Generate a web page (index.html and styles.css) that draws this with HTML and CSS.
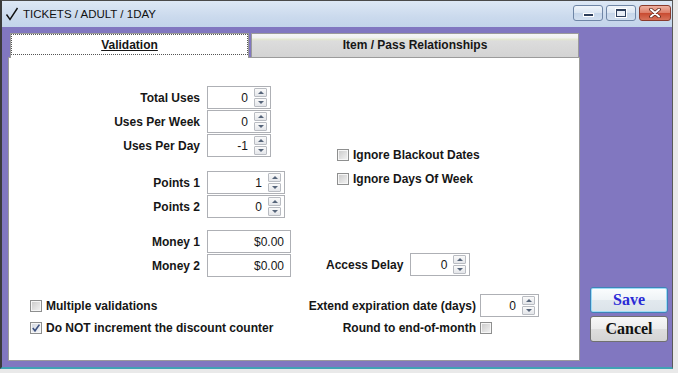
FILE: index.html
```html
<!DOCTYPE html>
<html lang="en">
<head>
    <meta charset="UTF-8">
    <meta name="viewport" content="width=device-width, initial-scale=1.0">
    <title>TICKETS / ADULT / 1DAY</title>
    <link rel="stylesheet" href="styles.css">
</head>
<body>

<div class="window">
    <div class="titlebar">
        <svg class="title-icon" width="14" height="14" viewBox="0 0 14 14">
            <path d="M1.5 7.5 L5 12.5 L12.5 1" fill="none" stroke="#111" stroke-width="1.4"/>
        </svg>
        <span class="title-text">TICKETS / ADULT / 1DAY</span>
        <div class="title-buttons">
            <span class="tbtn tbtn-min"><i></i></span>
            <span class="tbtn tbtn-max"><i></i></span>
            <span class="tbtn tbtn-close">
                <svg width="12" height="10" viewBox="0 0 12 10">
                    <path d="M2 1.5 L10 8.5 M10 1.5 L2 8.5" stroke="#5a2418" stroke-width="3.6" stroke-linecap="round"/>
                    <path d="M2 1.5 L10 8.5 M10 1.5 L2 8.5" stroke="#fff" stroke-width="2" stroke-linecap="round"/>
                </svg>
            </span>
        </div>
    </div>

    <div class="frame">
        <div class="tabs">
            <div class="tabstrip">
                <div class="tab active"><span class="focus">Validation</span></div>
                <div class="tab other">Item / Pass Relationships</div>
            </div>

            <div class="panel">
                <div class="upper">
                    <div class="left-col">
                        <div class="group">
                            <label>Total Uses</label>
                            <div class="spin spin-uses"><span class="val">0</span><span class="arrows"><i class="up"></i><i class="down"></i></span></div>
                            <label>Uses Per Week</label>
                            <div class="spin spin-uses"><span class="val">0</span><span class="arrows"><i class="up"></i><i class="down"></i></span></div>
                            <label>Uses Per Day</label>
                            <div class="spin spin-uses"><span class="val">-1</span><span class="arrows"><i class="up"></i><i class="down"></i></span></div>
                        </div>
                        <div class="group group-points">
                            <label>Points 1</label>
                            <div class="spin spin-points"><span class="val">1</span><span class="arrows"><i class="up"></i><i class="down"></i></span></div>
                            <label>Points 2</label>
                            <div class="spin spin-points"><span class="val">0</span><span class="arrows"><i class="up"></i><i class="down"></i></span></div>
                        </div>
                        <div class="group group-money">
                            <label>Money 1</label>
                            <div class="money">$0.00</div>
                            <label>Money 2</label>
                            <div class="money">$0.00</div>
                        </div>
                    </div>

                    <div class="mid-col">
                        <div class="ignore">
                            <div class="cb"><span class="box"></span>Ignore Blackout Dates</div>
                            <div class="cb"><span class="box"></span>Ignore Days Of Week</div>
                        </div>
                        <div class="delay-row">
                            <label>Access Delay</label>
                            <div class="spin spin-delay"><span class="val">0</span><span class="arrows"><i class="up"></i><i class="down"></i></span></div>
                        </div>
                    </div>
                </div>

                <div class="bottom">
                    <div class="bottom-left">
                        <div class="cb row-a"><span class="box"></span>Multiple validations</div>
                        <div class="cb row-b"><span class="box checked">
                            <svg width="10" height="10" viewBox="0 0 10 10"><path d="M1.8 5 L4 7.8 L8.4 1.6" fill="none" stroke="#3d5280" stroke-width="1.6"/></svg>
                        </span>Do NOT increment the discount counter</div>
                    </div>
                    <div class="extend-group">
                        <label class="row-a">Extend expiration date (days)</label>
                        <div class="spin spin-extend"><span class="val">0</span><span class="arrows"><i class="up"></i><i class="down"></i></span></div>
                        <label class="row-b">Round to end-of-month</label>
                        <div class="cb row-b"><span class="box"></span></div>
                    </div>
                </div>
            </div>
        </div>

        <div class="actions">
            <button class="btn btn-save">Save</button>
            <button class="btn">Cancel</button>
        </div>
    </div>
</div>

</body>
</html>
```

FILE: styles.css
```css
body {
    margin: 0;
    padding: 0;
    background-color: #e9e9e9;
    font-family: "Liberation Sans", Arial, sans-serif;
    color: #161616;
}
.window {
    width: 670px;
    height: 366px;
    border-top: 1px solid #4a4a4a;
    border-left: 2px solid #3b3b3b;
    border-right: 1px solid #5a5a5a;
    border-bottom: 2px solid #41a2b4;
    box-shadow: 0 1px 0 #1e1e1e;
    display: flex;
    flex-direction: column;
}

/* title bar */
.titlebar {
    height: 26px;
    flex: none;
    display: flex;
    align-items: center;
    padding-left: 3px;
    background: linear-gradient(#dde8f5, #cbdaed 60%, #c2d4ea);
}
.title-icon {
    margin-right: 4px;
}
.title-text {
    font-size: 11.5px;
    color: #111;
}
.title-buttons {
    margin-left: auto;
    align-self: flex-start;
    margin-top: 4px;
    padding-right: 1px;
    display: flex;
    gap: 3px;
}
.tbtn {
    box-sizing: border-box;
    width: 30px;
    height: 16px;
    border: 1px solid #6f86a6;
    border-radius: 3px;
    background: linear-gradient(#f0f5fb, #dae5f2 50%, #c6d6ea 51%, #d2e0f0);
    display: flex;
    align-items: center;
    justify-content: center;
}
.tbtn-min i {
    width: 9px;
    height: 2px;
    margin-top: 4px;
    background: #2d3f5c;
    border: 1px solid #fff;
}
.tbtn-max i {
    box-sizing: border-box;
    width: 10px;
    height: 8px;
    border: 1px solid #2d3f5c;
    border-top-width: 2px;
    background: #e8eef6;
    box-shadow: 0 0 0 1px #fff;
}
.tbtn-close {
    width: 32px;
    border-color: #8a3b2c;
    background: linear-gradient(#eeb0a0, #dc7c66 50%, #c84a30 51%, #d77259);
}

/* window body */
.frame {
    flex: 1;
    display: flex;
    padding: 6px 0 6px 6px;
    background-color: #8177c0;
}
.tabs {
    width: 572px;
    display: flex;
    flex-direction: column;
}
.tabstrip {
    height: 25px;
    display: flex;
    gap: 2px;
    padding-left: 2px;
}
.tab {
    box-sizing: border-box;
    height: 25px;
    border: 1px solid #9b9b9b;
    border-bottom: none;
    display: flex;
    align-items: center;
    justify-content: center;
    font-size: 12px;
    font-weight: bold;
}
.tab.active {
    width: 239px;
    background-color: #fff;
    position: relative;
    z-index: 1;
    align-items: stretch;
}
.focus {
    flex: 1;
    margin: 0 0 3px;
    border: 1px dotted #555;
    display: flex;
    align-items: center;
    justify-content: center;
    text-decoration: underline;
}
.tab.other {
    width: 328px;
    padding-bottom: 3px;
    background: linear-gradient(#f6f6f6 0, #f0f0f0 4px, #e5e9cf 5px, #dcdcdc 7px, #d3d3d3 100%);
}
.panel {
    box-sizing: border-box;
    height: 304px;
    margin-top: -1px;
    border: 1px solid #9b9b9b;
    background-color: #fff;
}

label {
    font-size: 12px;
    font-weight: bold;
    white-space: nowrap;
}

/* spinners and fields */
.spin, .money {
    box-sizing: border-box;
    height: 23px;
    border: 1px solid #aeb0b5;
    background-color: #fff;
    display: flex;
    font-size: 12px;
}
.spin .val {
    flex: 1;
    display: flex;
    align-items: center;
    justify-content: flex-end;
    padding-right: 6px;
}
.arrows {
    width: 13px;
    margin-right: 3px;
    padding: 1px 0;
    display: flex;
    flex-direction: column;
    gap: 1px;
}
.arrows i {
    box-sizing: border-box;
    height: 9px;
    border: 1px solid #b9bcc2;
    border-radius: 1px;
    background: linear-gradient(#fafafa, #e4e6ea);
    display: flex;
    align-items: center;
    justify-content: center;
}
.arrows i::after {
    content: "";
    border-left: 3px solid transparent;
    border-right: 3px solid transparent;
}
.arrows .up::after {
    border-bottom: 3px solid #56657a;
}
.arrows .down::after {
    border-top: 3px solid #56657a;
}
.money {
    width: 84px;
    align-items: center;
    justify-content: flex-end;
    padding-right: 6px;
}
.spin-uses {
    width: 64px;
}
.spin-points {
    width: 78px;
}
.spin-delay {
    width: 60px;
}
.spin-extend {
    width: 59px;
}

/* layout inside the tab */
.upper {
    margin-top: 28px;
    display: flex;
}
.left-col {
    width: 282px;
}
.group {
    display: grid;
    grid-template-columns: 191px auto;
    column-gap: 7px;
    row-gap: 1px;
    align-items: center;
    justify-items: start;
}
.group label {
    justify-self: end;
}
.group-points {
    margin-top: 14px;
}
.group-money {
    margin-top: 12px;
}
.mid-col {
    margin-left: 35px;
}
.ignore {
    margin-top: 57px;
    padding-left: 11px;
}
.ignore .cb {
    height: 24px;
}
.delay-row {
    margin-top: 62px;
    display: flex;
    align-items: center;
    gap: 7px;
}

.cb {
    display: flex;
    align-items: center;
    gap: 4px;
    font-size: 12px;
    font-weight: bold;
    white-space: nowrap;
}
.box {
    box-sizing: border-box;
    width: 12px;
    height: 12px;
    border: 1px solid #8e8f8f;
    background: linear-gradient(135deg, #c9c9c9, #f4f4f4);
    box-shadow: inset 0 0 0 1px #f6f6f6;
    display: flex;
    align-items: center;
    justify-content: center;
}
.box.checked {
    background: linear-gradient(135deg, #d3d7df, #f6f7f9);
}

.bottom {
    margin-top: 17px;
    display: flex;
}
.bottom-left {
    box-sizing: border-box;
    width: 297px;
    padding-left: 21px;
}
.row-a {
    height: 23px;
}
.row-b {
    height: 22px;
}
.extend-group {
    display: grid;
    grid-template-columns: 170px auto;
    grid-template-rows: 23px 22px;
    column-gap: 4px;
    align-items: center;
    justify-items: start;
}
.extend-group label {
    justify-self: end;
    display: flex;
    align-items: center;
}

/* buttons */
.actions {
    width: 78px;
    margin-left: 10px;
    padding-top: 254px;
    display: flex;
    flex-direction: column;
    gap: 3px;
}
.btn {
    box-sizing: border-box;
    width: 78px;
    height: 26px;
    padding: 0;
    border: 1px solid #707070;
    border-radius: 3px;
    background: linear-gradient(#f8f8f8, #ececec 50%, #dedede 51%, #d4d4d4);
    font-family: "Liberation Serif", "Times New Roman", serif;
    font-size: 16px;
    font-weight: bold;
    color: #111;
    cursor: pointer;
}
.btn-save {
    border-color: #3d84b8;
    box-shadow: inset 0 0 0 1px #9ddcf7;
    background: linear-gradient(#fbfdfe, #eef3f6 50%, #e2e9ee 51%, #dbe3e9);
    color: #2a2ad6;
}
```
